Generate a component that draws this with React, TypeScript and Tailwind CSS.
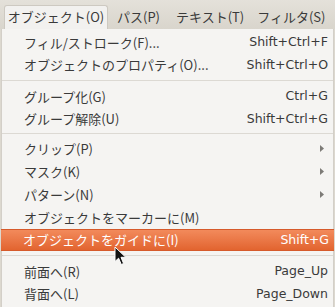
import React from "react";

type Row =
  | { kind: "item"; label: string; shortcut?: string; sub?: boolean; h: number; active?: boolean }
  | { kind: "sep"; h: number };

const rows: Row[] = [
  { kind: "item", label: "フィル/ストローク(F)...", shortcut: "Shift+Ctrl+F", h: 23 },
  { kind: "item", label: "オブジェクトのプロパティ(O)...", shortcut: "Shift+Ctrl+O", h: 22 },
  { kind: "sep", h: 9 },
  { kind: "item", label: "グループ化(G)", shortcut: "Ctrl+G", h: 23 },
  { kind: "item", label: "グループ解除(U)", shortcut: "Shift+Ctrl+G", h: 22 },
  { kind: "sep", h: 7 },
  { kind: "item", label: "クリップ(P)", sub: true, h: 23 },
  { kind: "item", label: "マスク(K)", sub: true, h: 23 },
  { kind: "item", label: "パターン(N)", sub: true, h: 23 },
  { kind: "item", label: "オブジェクトをマーカーに(M)", h: 23 },
  { kind: "item", label: "オブジェクトをガイドに(I)", shortcut: "Shift+G", h: 22, active: true },
  { kind: "sep", h: 9 },
  { kind: "item", label: "前面へ(R)", shortcut: "Page_Up", h: 23 },
  { kind: "item", label: "背面へ(L)", shortcut: "Page_Down", h: 22 },
];

const cjk = { fontFamily: '"Noto Sans CJK JP", "Noto Sans", sans-serif' };
const lat = { fontFamily: '"DejaVu Sans", "Noto Sans", sans-serif' };

export default function App() {
  return (
    <div className="relative w-[335px] h-[307px] overflow-hidden bg-[#dcd8cf] text-[#3a3a3a]">
      {/* menubar */}
      <div className="h-[29px] flex items-end bg-gradient-to-b from-[#e4e1da] to-[#d9d5cc] text-[13px]" style={cjk}>
        <div className="ml-[4px] w-[104px] h-[24px] rounded-t-[3px] bg-[#f2f1ef] border border-b-0 border-[#cdc9c1] flex items-center justify-center pb-[1px]">
          オブジェクト(O)
        </div>
        <div className="ml-[9px] h-[24px] flex items-center pb-[1px]">パス(P)</div>
        <div className="ml-[16px] h-[24px] flex items-center pb-[1px]">テキスト(T)</div>
        <div className="ml-[13px] h-[24px] flex items-center pb-[1px]">フィルタ(S)</div>
      </div>
      {/* menu */}
      <div className="ml-[1px] w-[333px] bg-[#f5f4f2] border-x border-[#d3cfc8] pt-[2px] pb-[2px] text-[13px]">
        {rows.map((r, i) =>
          r.kind === "sep" ? (
            <div key={i} className="flex items-center" style={{ height: r.h }}>
              <div className="w-full h-px bg-[#dcd9d3]" />
            </div>
          ) : (
            <div
              key={i}
              className={
                "flex items-center pl-[22px] pr-[5px] " +
                (r.active
                  ? "bg-gradient-to-b from-[#f28a5b] to-[#e2642f] text-white border-y border-[#d65a2b] -mx-px"
                  : "")
              }
              style={{ height: r.h }}
            >
              <span className="flex-1 whitespace-nowrap" style={cjk}>
                {r.label}
              </span>
              {r.shortcut && (
                <span className="whitespace-nowrap text-[12.5px]" style={lat}>
                  {r.shortcut}
                </span>
              )}
              {r.sub && (
                <svg width="4" height="7" viewBox="0 0 4 7" className="mr-[4px]">
                  <path d="M0 0 L4 3.5 L0 7 Z" fill="#7d7b77" />
                </svg>
              )}
            </div>
          )
        )}
      </div>
      {/* cursor */}
      <svg
        className="absolute left-[114px] top-[246px]"
        width="14"
        height="20"
        viewBox="0 0 14 20"
      >
        <path
          d="M1 1 L1 15.5 L4.6 12.2 L7.3 18.5 L9.6 17.5 L7 11.3 L11.8 11.3 Z"
          fill="#111"
          stroke="#fff"
          strokeWidth="1"
          strokeLinejoin="round"
        />
      </svg>
    </div>
  );
}
